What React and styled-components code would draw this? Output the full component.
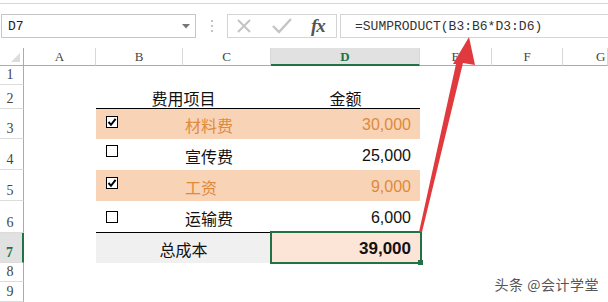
import React from 'react';
import styled, { createGlobalStyle } from 'styled-components';

const GREEN = '#217346';
const PEACH = '#f9d3b5';
const ORANGE = '#dd8a3d';

const GlobalStyle = createGlobalStyle`
  html, body {
    margin: 0;
    padding: 0;
    background: #fff;
  }
  body {
    width: 608px;
    height: 302px;
    overflow: hidden;
  }
`;

const Window = styled.div`
  position: relative;
  width: 608px;
  height: 302px;
  overflow: hidden;
  background: #fff;
  padding-top: 3px;
  box-sizing: border-box;
`;

const RibbonEdge = styled.div`
  height: 10px;
  border-top: 1px solid #d6d6d6;
`;

const FormulaBar = styled.div`
  display: flex;
  height: 24px;
  margin-bottom: 10px;
`;

const NameBox = styled.div`
  margin-left: 1px;
  width: 195px;
  box-sizing: border-box;
  border: 1px solid #c6c6c6;
  display: flex;
  align-items: center;
  justify-content: space-between;
  padding: 0 5px 0 6px;
  font: 13px "Liberation Mono", monospace;
  color: #222;
`;

const Grip = styled.div`
  width: 31px;
  display: flex;
  flex-direction: column;
  align-items: center;
  justify-content: center;
  gap: 3px;
`;

const GripDot = styled.span`
  width: 2px;
  height: 2px;
  background: #c4c4c4;
`;

const FxBox = styled.div`
  width: 110px;
  box-sizing: border-box;
  border: 1px solid #d4d4d4;
  display: flex;
  align-items: center;
  padding-left: 8px;
  gap: 20px;
`;

const FxLabel = styled.span`
  font: italic 700 19px "Liberation Serif", serif;
  color: #555;
  letter-spacing: -1px;
  margin-left: -1px;
`;

const FormulaInput = styled.div`
  flex: 1;
  margin-left: 3px;
  border: 1px solid #d4d4d4;
  border-right: none;
  display: flex;
  align-items: center;
  padding-left: 14px;
  font: 13px "Liberation Mono", monospace;
  color: #333;
`;

const Sheet = styled.div`
  display: grid;
  grid-template-columns: 24px 72px 87px 88px 149px 72px 71px 1fr;
  grid-template-rows: 18px 19px 24px 30px 31px 31px 32px 30px 19px 20px;
`;

const ColHead = styled.div`
  box-sizing: border-box;
  display: flex;
  align-items: center;
  justify-content: ${p => (p.$edge ? 'flex-start' : 'center')};
  padding: 1px 0 0 ${p => (p.$edge ? 33 : 0)}px;
  background: ${p => (p.$active ? '#e1e1e1' : '#fff')};
  border-right: 1px solid #d8d8d8;
  border-bottom: ${p => (p.$active ? `2px solid ${GREEN}` : '1px solid #ababab')};
  color: ${p => (p.$active ? GREEN : '#444')};
  font: ${p => (p.$active ? 700 : 400)} 13px "Liberation Serif", serif;
`;

const Corner = styled.div`
  box-sizing: border-box;
  display: flex;
  align-items: flex-end;
  justify-content: flex-end;
  padding: 0 3px 3px 0;
  border-right: 1px solid #ababab;
  border-bottom: 1px solid #ababab;
`;

const RowHead = styled.div`
  box-sizing: border-box;
  display: flex;
  align-items: flex-end;
  justify-content: center;
  padding: 0 3px 1px 0;
  background: ${p => (p.$active ? '#e1e1e1' : '#fff')};
  border-right: ${p => (p.$active ? `2px solid ${GREEN}` : '1px solid #ababab')};
  border-bottom: 1px solid #dcdcdc;
  color: ${p => (p.$active ? GREEN : '#444')};
  font: ${p => (p.$active ? 700 : 400)} 14px "Liberation Serif", serif;
`;

const Cell = styled.div`
  position: relative;
  box-sizing: border-box;
  min-width: 0;
  display: flex;
  align-items: center;
  justify-content: ${p =>
    p.$align === 'right' ? 'flex-end' : p.$align === 'center' ? 'center' : 'flex-start'};
  grid-column: ${p => (p.$span ? `span ${p.$span}` : 'auto')};
  background: ${p => p.$fill || 'transparent'};
  border-bottom: ${p => (p.$rule ? '1px solid #000' : 'none')};
  color: ${p => p.$tone || '#111'};
  font-family: "Liberation Sans", "Noto Sans CJK SC", sans-serif;
  font-weight: ${p => (p.$bold ? 700 : 400)};
  font-size: ${p => (p.$bold ? 17 : 16)}px;
  padding: 2px ${p => (p.$align === 'right' ? 9 : 0)}px 0 ${p => (p.$align === 'left' ? 2 : 0)}px;
  white-space: nowrap;
`;

const BoxCell = styled.div`
  box-sizing: border-box;
  display: flex;
  align-items: flex-start;
  padding: ${p => p.$offset}px 0 0 10px;
  background: ${p => p.$fill || 'transparent'};
  border-bottom: ${p => (p.$rule ? '1px solid #000' : 'none')};
`;

const Box = styled.span`
  width: 12px;
  height: 12px;
  box-sizing: border-box;
  border: 1px solid #000;
  background: #fff;
  display: flex;
  align-items: center;
  justify-content: center;
`;

const Selection = styled.div`
  position: absolute;
  top: -2px;
  left: -1px;
  right: -2px;
  bottom: -1px;
  border: 2px solid ${GREEN};
`;

const Handle = styled.span`
  position: absolute;
  right: -3px;
  bottom: -3px;
  width: 5px;
  height: 5px;
  background: ${GREEN};
`;

const Arrow = styled.svg`
  position: absolute;
  left: 0;
  top: 0;
  pointer-events: none;
`;

const Watermark = styled.div`
  position: absolute;
  right: 9px;
  bottom: 8px;
  font: 14px "Noto Sans CJK SC", sans-serif;
  color: #555;
  text-shadow: 0 0 2px #fff, 0 0 2px #fff;
  letter-spacing: 0.5px;
`;

const items = [
  { row: 3, checked: true, name: '材料费', amount: '30,000', hi: true, offset: 7 },
  { row: 4, checked: false, name: '宣传费', amount: '25,000', offset: 6 },
  { row: 5, checked: true, name: '工资', amount: '9,000', hi: true, offset: 7 },
  { row: 6, checked: false, name: '运输费', amount: '6,000', offset: 10, last: true },
];

const Blanks = ({ n }) => Array.from({ length: n }, (_, i) => <Cell key={i} />);

function CheckBox({ checked }) {
  return (
    <Box>
      {checked && (
        <svg width="10" height="10" viewBox="0 0 10 10">
          <path d="M1.5 5 L4 7.8 L8.6 1.8" fill="none" stroke="#000" strokeWidth="2" />
        </svg>
      )}
    </Box>
  );
}

export default function App() {
  return (
    <Window>
      <GlobalStyle />
      <RibbonEdge />
      <FormulaBar>
        <NameBox>
          <span>D7</span>
          <svg width="8" height="5" viewBox="0 0 8 5">
            <path d="M0 0 H8 L4 4.5 Z" fill="#777" />
          </svg>
        </NameBox>
        <Grip>
          <GripDot />
          <GripDot />
          <GripDot />
        </Grip>
        <FxBox>
          <svg width="16" height="16" viewBox="0 0 16 16">
            <path d="M2 2 L14 14 M14 2 L2 14" stroke="#c4c4c4" strokeWidth="2" />
          </svg>
          <svg width="20" height="16" viewBox="0 0 20 16">
            <path d="M1 8 L7 14 L19 1" fill="none" stroke="#c4c4c4" strokeWidth="2.4" />
          </svg>
          <FxLabel>fx</FxLabel>
        </FxBox>
        <FormulaInput>=SUMPRODUCT(B3:B6*D3:D6)</FormulaInput>
      </FormulaBar>

      <Sheet>
        <Corner>
          <svg width="9" height="9" viewBox="0 0 9 9">
            <path d="M9 0 V9 H0 Z" fill="#dcdcdc" />
          </svg>
        </Corner>
        {['A', 'B', 'C', 'D', 'E', 'F', 'G'].map(c => (
          <ColHead key={c} $active={c === 'D'} $edge={c === 'G'}>
            {c}
          </ColHead>
        ))}

        <RowHead>1</RowHead>
        <Blanks n={7} />

        <RowHead>2</RowHead>
        <Cell />
        <Cell $span={2} $align="center" $rule>费用项目</Cell>
        <Cell $align="center" $rule>金额</Cell>
        <Blanks n={3} />

        {items.map(it => (
          <React.Fragment key={it.row}>
            <RowHead>{it.row}</RowHead>
            <Cell />
            <BoxCell $offset={it.offset} $fill={it.hi ? PEACH : null} $rule={it.last}>
              <CheckBox checked={it.checked} />
            </BoxCell>
            <Cell $align="left" $fill={it.hi ? PEACH : null} $tone={it.hi ? ORANGE : null} $rule={it.last}>
              {it.name}
            </Cell>
            <Cell $align="right" $fill={it.hi ? PEACH : null} $tone={it.hi ? ORANGE : null}>
              {it.amount}
            </Cell>
            <Blanks n={3} />
          </React.Fragment>
        ))}

        <RowHead $active>7</RowHead>
        <Cell />
        <Cell $span={2} $align="center" $fill="#f0f0f0">总成本</Cell>
        <Cell $align="right" $fill="#fce5d7" $bold>
          39,000
          <Selection>
            <Handle />
          </Selection>
        </Cell>
        <Blanks n={3} />

        <RowHead>8</RowHead>
        <Blanks n={7} />
        <RowHead>9</RowHead>
        <Blanks n={7} />
      </Sheet>

      <Arrow width="608" height="302" viewBox="0 0 608 302">
        <polygon
          points="469,37 475,65 463,63 422,232 419,232 456,64 453,64"
          fill="#e0393e"
        />
      </Arrow>
      <Watermark>头条 @会计学堂</Watermark>
    </Window>
  );
}
